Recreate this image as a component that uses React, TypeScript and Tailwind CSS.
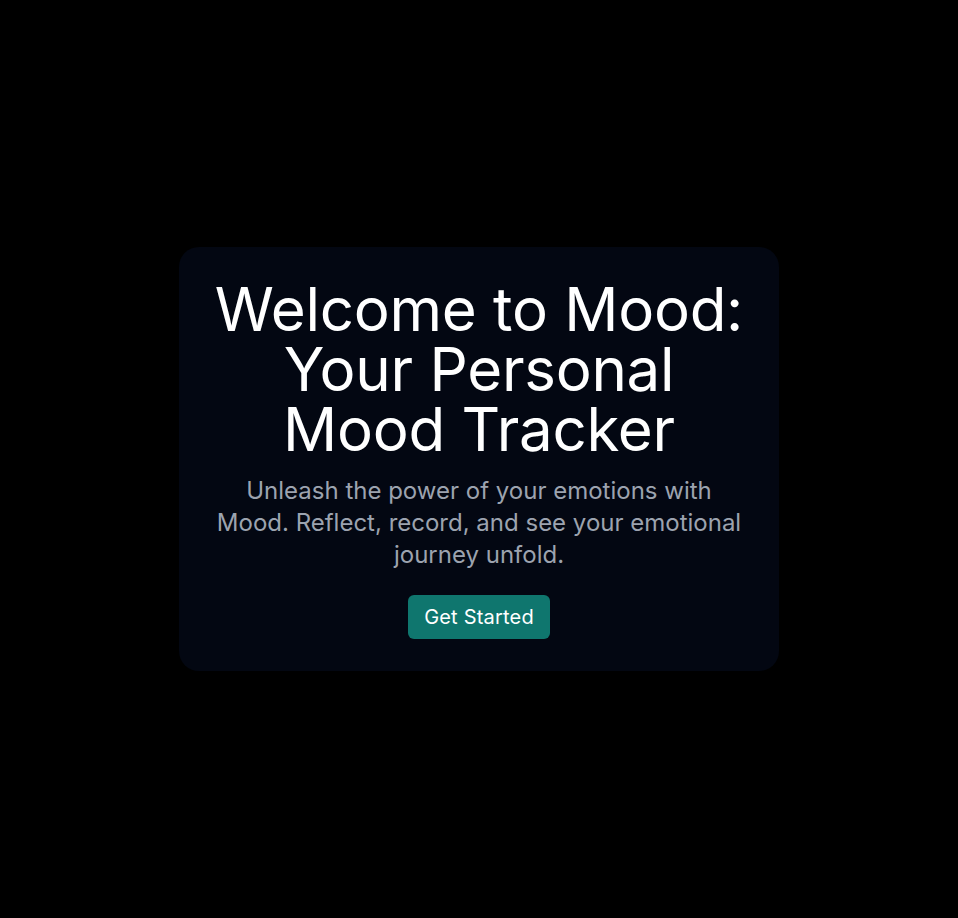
export default function App() {
  return (
    <main
      className="min-h-screen bg-black flex items-center justify-center"
      style={{ fontFamily: 'Inter, "Noto Sans", sans-serif' }}
    >
      <section className="w-[600px] bg-[#030712] rounded-[20px] p-8 flex flex-col items-center text-center">
        <h1 className="text-6xl leading-none text-white tracking-[-0.25px]">
          Welcome to Mood: Your Personal Mood Tracker
        </h1>
        <p className="mt-4 text-2xl text-[#9ca3af]">
          Unleash the power of your emotions with Mood. Reflect, record, and see your emotional journey unfold.
        </p>
        <button className="mt-6 bg-[#0f766e] text-white text-xl tracking-[0.2px] px-4 py-2 rounded-md">
          Get Started
        </button>
      </section>
    </main>
  );
}
